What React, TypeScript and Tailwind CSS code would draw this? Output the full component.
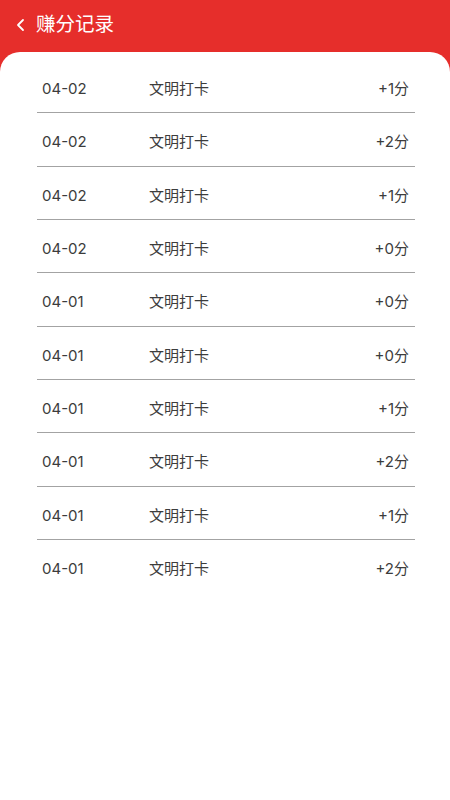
import React from "react";

const rows = [
  ["04-02", "+1分"],
  ["04-02", "+2分"],
  ["04-02", "+1分"],
  ["04-02", "+0分"],
  ["04-01", "+0分"],
  ["04-01", "+0分"],
  ["04-01", "+1分"],
  ["04-01", "+2分"],
  ["04-01", "+1分"],
  ["04-01", "+2分"],
];

export default function App() {
  return (
    <div
      className="w-[450px] min-h-[800px] bg-[#e62e2b]"
      style={{ fontFamily: 'Inter, "Noto Sans CJK SC", "Noto Sans", sans-serif' }}
    >
      <div className="h-[52px] flex items-center pl-[15px] text-white pb-[2px]">
        <svg width="12" height="14" viewBox="0 0 12 14" className="mr-[9px]">
          <path d="M8 2 L3 7 L8 12" fill="none" stroke="white" strokeWidth="1.8" strokeLinecap="round" strokeLinejoin="round" />
        </svg>
        <span className="text-[19.5px] leading-none">赚分记录</span>
      </div>
      <div className="bg-white rounded-t-[20px] min-h-[748px] pt-[8px]">
        <div className="ml-[37px] mr-[35px]">
          {rows.map(([d, s], i) => (
            <div
              key={i}
              className={
                "h-[53.33px] flex items-center pt-[6px] pl-[5px] pr-[6px] text-[15px] text-[#3c3c3c] " +
                (i < rows.length - 1 ? "border-b border-[#a3a3a3]" : "")
              }
            >
              <span className="w-[107px]">{d}</span>
              <span className="flex-1">文明打卡</span>
              <span>{s}</span>
            </div>
          ))}
        </div>
      </div>
    </div>
  );
}
